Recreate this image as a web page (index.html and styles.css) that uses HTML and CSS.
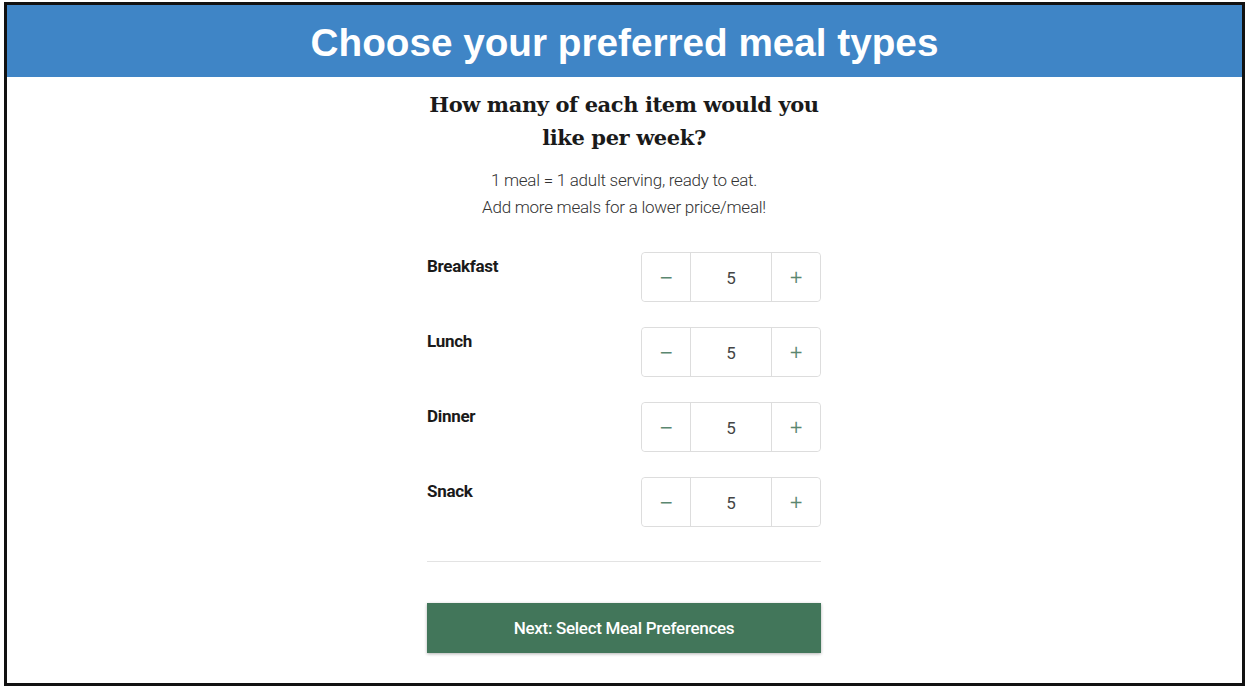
FILE: index.html
```html
<!DOCTYPE html>
<html lang="en">
<head>
<meta charset="utf-8">
<title>Choose your preferred meal types</title>
<link rel="stylesheet" href="styles.css">
</head>
<body>
<div class="page">
  <div class="frame">
    <header class="banner">
      <h1 class="banner-title">Choose your preferred meal types</h1>
    </header>
    <main class="content">
      <h2 class="question">How many of each item would you<br>like per week?</h2>
      <p class="note">1 meal = 1 adult serving, ready to eat.<br>Add more meals for a lower price/meal!</p>
      <div class="rows">
        <div class="row">
          <span class="label">Breakfast</span>
          <div class="stepper"><button class="step">&minus;</button><span class="value">5</span><button class="step">+</button></div>
        </div>
        <div class="row">
          <span class="label">Lunch</span>
          <div class="stepper"><button class="step">&minus;</button><span class="value">5</span><button class="step">+</button></div>
        </div>
        <div class="row">
          <span class="label">Dinner</span>
          <div class="stepper"><button class="step">&minus;</button><span class="value">5</span><button class="step">+</button></div>
        </div>
        <div class="row">
          <span class="label">Snack</span>
          <div class="stepper"><button class="step">&minus;</button><span class="value">5</span><button class="step">+</button></div>
        </div>
      </div>
      <hr class="divider">
      <button class="next">Next: Select Meal Preferences</button>
    </main>
  </div>
</div>
</body>
</html>
```

FILE: styles.css
```css
* { box-sizing: border-box; }
html, body { margin: 0; padding: 0; background: #fff; }
.page { padding: 2px 6px 6px 4px; }
.frame {
  height: 684px;
  border: 3px solid #111;
  display: flex;
  flex-direction: column;
}
.banner {
  background: #3f85c6;
  height: 72px;
  display: flex;
  align-items: center;
  justify-content: center;
}
.banner-title {
  margin: 0;
  font-family: "Liberation Sans", Arial, sans-serif;
  font-weight: 700;
  font-size: 38.7px;
  color: #fff;
  padding-top: 3px;
}
.content {
  width: 395px;
  padding-right: 1px;
  margin: 0 auto;
  display: flex;
  flex-direction: column;
  align-items: stretch;
}
.question {
  margin: 11px 0 0;
  font-family: "DejaVu Serif", Georgia, serif;
  font-weight: 700;
  font-size: 21px;
  line-height: 33px;
  color: #1a1a1a;
  text-align: center;
  letter-spacing: -0.4px;
}
.note {
  margin: 13px 0 0;
  font-family: Roboto, "Liberation Sans", sans-serif;
  font-weight: 300;
  font-size: 17px;
  line-height: 27px;
  color: #333;
  text-align: center;
  letter-spacing: -0.25px;
}
.rows {
  margin-top: 31px;
  display: flex;
  flex-direction: column;
  gap: 25px;
}
.row {
  display: flex;
  justify-content: space-between;
  align-items: flex-start;
}
.label {
  font-family: Roboto, "Liberation Sans", sans-serif;
  font-weight: 700;
  font-size: 17px;
  color: #1a1a1a;
  padding-top: 4px;
  letter-spacing: -0.3px;
}
.stepper {
  display: flex;
  width: 180px;
  height: 50px;
  border: 1px solid #ddd;
  border-radius: 4px;
}
.step {
  width: 48px;
  border: 0;
  background: #fff;
  color: #5a8770;
  font-family: "DejaVu Sans", sans-serif;
  font-size: 17px;
  padding: 0;
  border-radius: 4px;
}
.value {
  flex: 1;
  border-left: 1px solid #ddd;
  border-right: 1px solid #ddd;
  display: flex;
  align-items: center;
  justify-content: center;
  font-family: Roboto, "Liberation Sans", sans-serif;
  font-size: 17px;
  color: #444;
  padding-top: 2px;
}
.divider {
  margin: 34px 0 0;
  border: 0;
  border-top: 1px solid #e3e3e3;
}
.next {
  margin-top: 41px;
  height: 50px;
  border: 0;
  background: #42765a;
  color: #fff;
  font-family: Roboto, "Liberation Sans", sans-serif;
  font-weight: 500;
  font-size: 17px;
  letter-spacing: -0.3px;
  box-shadow: 0 1px 3px rgba(0,0,0,0.3);
}
```
